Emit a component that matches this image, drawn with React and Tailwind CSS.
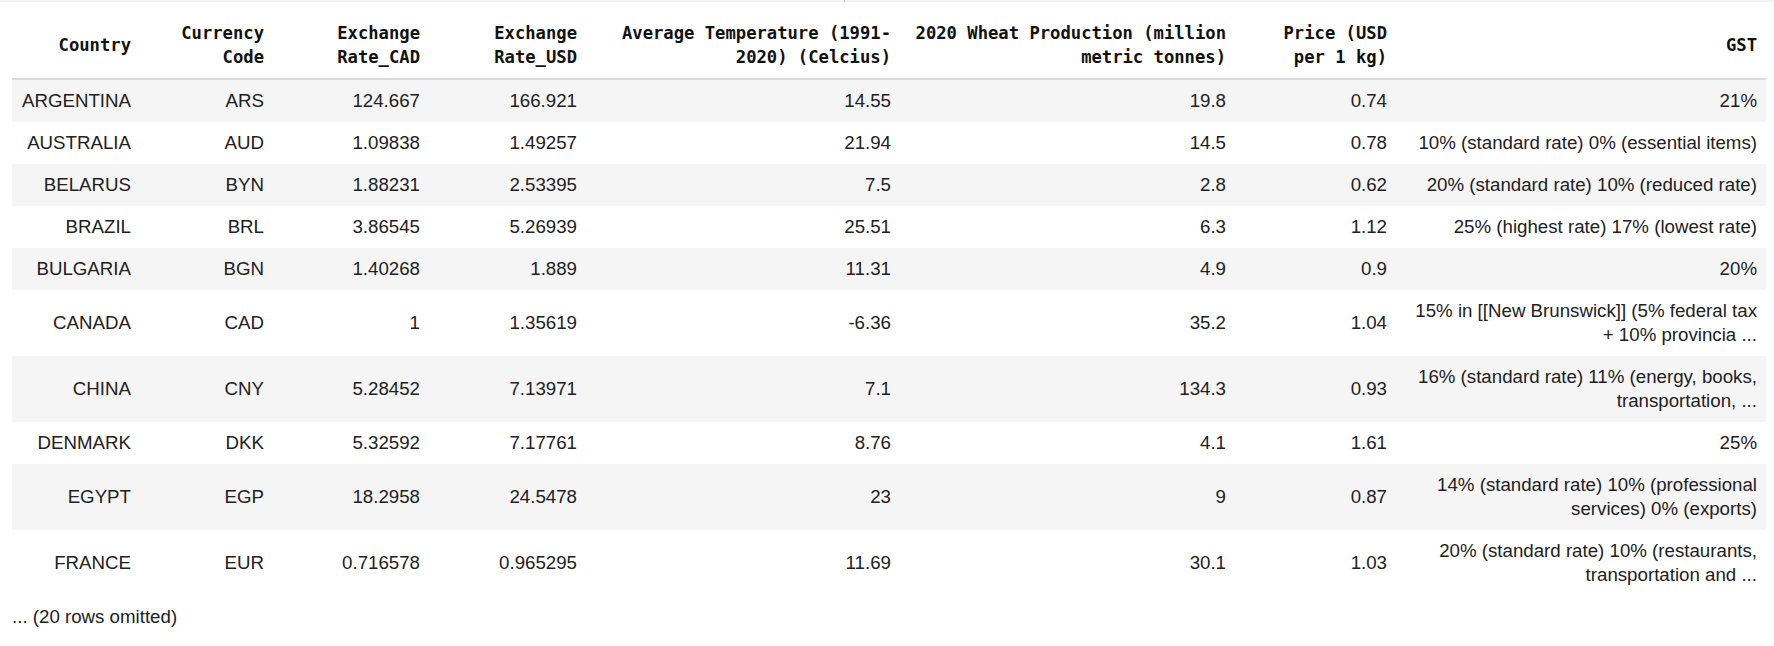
import React from "react";

const columns = [
  { key: "country", lines: ["Country"], width: "w-[128px]" },
  { key: "code", lines: ["Currency", "Code"], width: "w-[133px]" },
  { key: "cad", lines: ["Exchange", "Rate_CAD"], width: "w-[156px]" },
  { key: "usd", lines: ["Exchange", "Rate_USD"], width: "w-[157px]" },
  { key: "temp", lines: ["Average Temperature (1991-", "2020) (Celcius)"], width: "w-[314px]" },
  { key: "wheat", lines: ["2020 Wheat Production (million", "metric tonnes)"], width: "w-[335px]" },
  { key: "price", lines: ["Price (USD", "per 1 kg)"], width: "w-[161px]" },
  { key: "gst", lines: ["GST"], width: "w-[370px]" },
];

const rows = [
  ["ARGENTINA", "ARS", "124.667", "166.921", "14.55", "19.8", "0.74", ["21%"]],
  ["AUSTRALIA", "AUD", "1.09838", "1.49257", "21.94", "14.5", "0.78", ["10% (standard rate) 0% (essential items)"]],
  ["BELARUS", "BYN", "1.88231", "2.53395", "7.5", "2.8", "0.62", ["20% (standard rate) 10% (reduced rate)"]],
  ["BRAZIL", "BRL", "3.86545", "5.26939", "25.51", "6.3", "1.12", ["25% (highest rate) 17% (lowest rate)"]],
  ["BULGARIA", "BGN", "1.40268", "1.889", "11.31", "4.9", "0.9", ["20%"]],
  ["CANADA", "CAD", "1", "1.35619", "-6.36", "35.2", "1.04", ["15% in [[New Brunswick]] (5% federal tax", "+ 10% provincia ..."]],
  ["CHINA", "CNY", "5.28452", "7.13971", "7.1", "134.3", "0.93", ["16% (standard rate) 11% (energy, books,", "transportation, ..."]],
  ["DENMARK", "DKK", "5.32592", "7.17761", "8.76", "4.1", "1.61", ["25%"]],
  ["EGYPT", "EGP", "18.2958", "24.5478", "23", "9", "0.87", ["14% (standard rate) 10% (professional", "services) 0% (exports)"]],
  ["FRANCE", "EUR", "0.716578", "0.965295", "11.69", "30.1", "1.03", ["20% (standard rate) 10% (restaurants,", "transportation and ..."]],
];

const App = () => {
  return (
    <div className="w-[1774px] min-h-[646px] bg-white text-[#212121]">
      {/* thin output strip at the very top */}
      <div className="relative h-[2px] bg-[#f3f3f3]">
        <div className="absolute left-[844px] top-0 w-px h-[2px] bg-[#c4c4c4]" />
      </div>

      <table className="table-fixed border-collapse ml-[12px] mt-[10px] w-[1754px]">
        <colgroup>
          {columns.map((c) => (
            <col key={c.key} className={c.width} />
          ))}
        </colgroup>
        <thead>
          <tr className="border-b-2 border-[#dadada]">
            {columns.map((c) => (
              <th
                key={c.key}
                className="px-[9px] py-[9px] text-right align-middle font-bold text-[17.2px] leading-[24px] text-[#111] whitespace-nowrap"
                style={{ fontFamily: '"DejaVu Sans Mono", "Liberation Mono", monospace' }}
              >
                {c.lines.map((l, i) => (
                  <div key={i}>{l}</div>
                ))}
              </th>
            ))}
          </tr>
        </thead>
        <tbody className="font-['Liberation_Sans',Arial,sans-serif] text-[18.7px] leading-[24px]">
          {rows.map((r, ri) => (
            <tr key={r[0]} className={ri % 2 === 0 ? "bg-[#f5f5f5]" : "bg-white"}>
              {r.map((cell, ci) => (
                <td key={ci} className="px-[9px] py-[9px] text-right align-middle whitespace-nowrap">
                  {Array.isArray(cell)
                    ? cell.map((l, i) => <div key={i}>{l}</div>)
                    : cell}
                </td>
              ))}
            </tr>
          ))}
        </tbody>
      </table>

      <p className="ml-[12px] mt-[9px] font-['Liberation_Sans',Arial,sans-serif] text-[18.7px] leading-[24px]">
        ... (20 rows omitted)
      </p>
    </div>
  );
};

export default App;
